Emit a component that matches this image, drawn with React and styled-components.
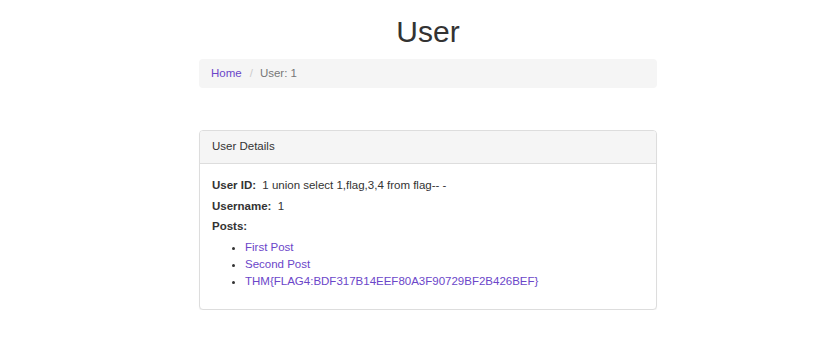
import styled, { createGlobalStyle } from 'styled-components';

const GlobalStyle = createGlobalStyle`
	body {
		margin: 0;
		background: #fff;
		color: #333;
		font-family: 'Liberation Sans', Arial, sans-serif;
		font-size: 11.5px;
		line-height: 17px;
	}
	a {
		color: #6b46c9;
		text-decoration: none;
	}
`;

const posts = [
	'First Post',
	'Second Post',
	'THM{FLAG4:BDF317B14EEF80A3F90729BF2B426BEF}',
];

const App = () => {
	return (
		<>
			<GlobalStyle />
			<Container>
				<Title>User</Title>
				<Breadcrumb>
					<Crumb>
						<a href='#'>Home</a>
					</Crumb>
					<Crumb $active>User: 1</Crumb>
				</Breadcrumb>
				<Panel>
					<PanelHeading>User Details</PanelHeading>
					<PanelBody>
						<Field>
							<Label>User ID:</Label> 1 union select 1,flag,3,4 from flag-- -
						</Field>
						<Field>
							<Label>Username:</Label> 1
						</Field>
						<Field>
							<Label>Posts:</Label>
						</Field>
						<PostList>
							{posts.map((post) => (
								<li key={post}>
									<a href='#'>{post}</a>
								</li>
							))}
						</PostList>
					</PanelBody>
				</Panel>
			</Container>
		</>
	);
};

const Container = styled.div`
	width: 458px;
	margin: 0 auto;
	padding-left: 16px;
`;

const Title = styled.h1`
	margin: 15px 0 10px;
	font-size: 30px;
	line-height: 34px;
	font-weight: 500;
	text-align: center;
	color: #333;
`;

const Breadcrumb = styled.ol`
	display: flex;
	margin: 0 0 42px;
	padding: 6px 12px;
	list-style: none;
	background: #f5f5f5;
	border-radius: 4px;
`;

const Crumb = styled.li`
	color: ${(p) => (p.$active ? '#777' : 'inherit')};
	&:not(:first-child)::before {
		content: '/';
		padding: 0 7px 0 8px;
		color: #ccc;
	}
`;

const Panel = styled.div`
	border: 1px solid #ddd;
	border-radius: 4px;
	box-shadow: 0 1px 1px rgba(0, 0, 0, 0.05);
	background: #fff;
`;

const PanelHeading = styled.div`
	padding: 7px 12px 8px;
	background: #f5f5f5;
	border-bottom: 1px solid #ddd;
	border-radius: 3px 3px 0 0;
`;

const PanelBody = styled.div`
	padding: 13px 12px 11px;
`;

const Field = styled.p`
	margin: 0 0 3.5px;
`;

const Label = styled.b`
	margin-right: 3px;
`;

const PostList = styled.ul`
	margin: 0 0 8px;
	padding-left: 33px;
	li {
		height: 17px;
	}
`;

export default App;
